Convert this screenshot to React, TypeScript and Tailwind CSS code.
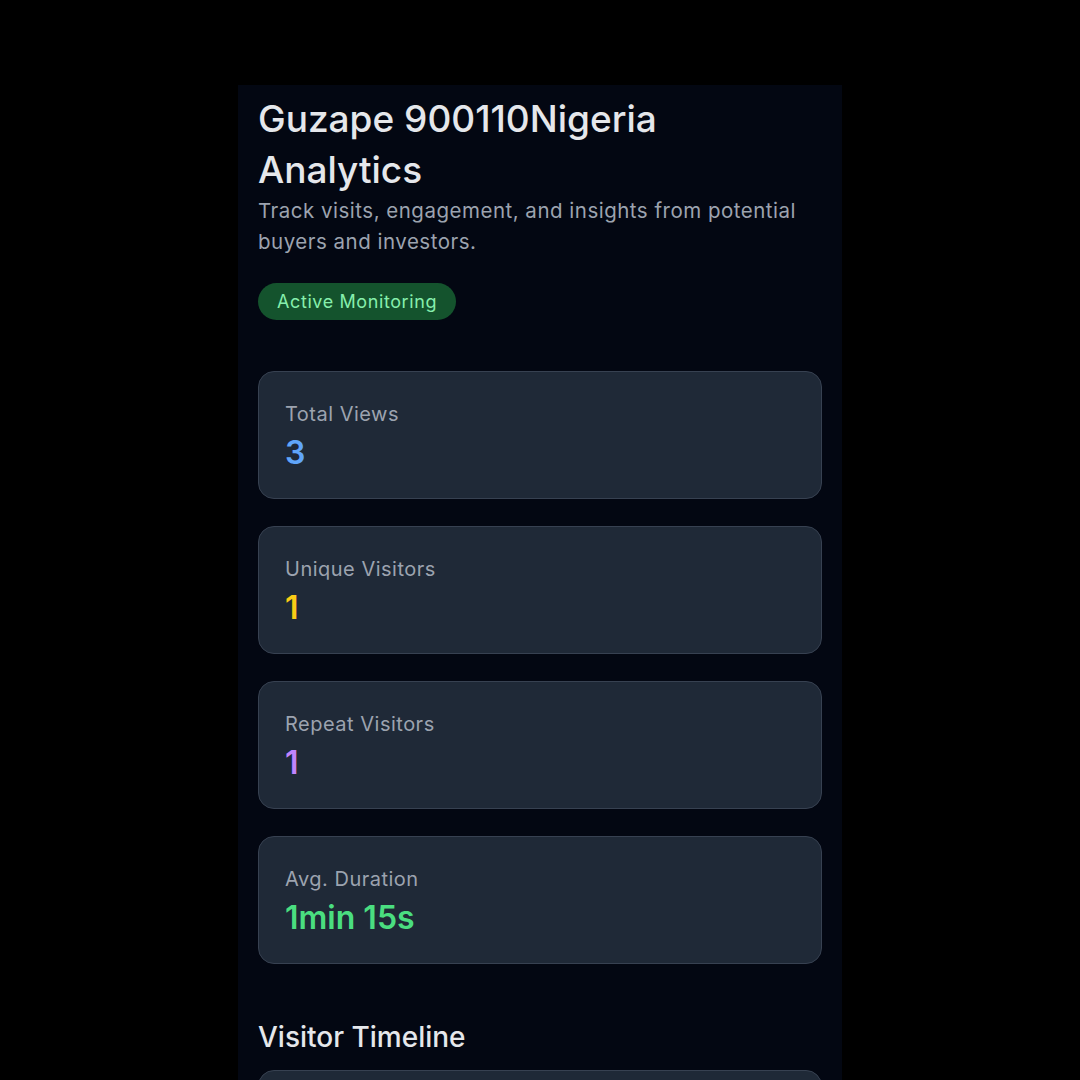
import React from 'react';

// Property analytics summary - stat cards + timeline header

interface Stat {
  label: string;
  value: string;
  color: string;
}

const stats: Stat[] = [
  { label: 'Total Views', value: '3', color: 'text-[#60a5fa]' },
  { label: 'Unique Visitors', value: '1', color: 'text-[#facc15]' },
  { label: 'Repeat Visitors', value: '1', color: 'text-[#c084fc]' },
  { label: 'Avg. Duration', value: '1min 15s', color: 'text-[#4ade80]' },
];

const StatCard: React.FC<{ stat: Stat }> = ({ stat }) => (
  <div className="rounded-[16px] border border-[#374151] bg-[#1f2937] px-[26px] pt-[27px] pb-[25px]">
    <div className="text-[20px] leading-[30px] tracking-[0.5px] text-[#9ca3af]">{stat.label}</div>
    <div className={`mt-[4px] text-[32px] leading-[40px] font-semibold ${stat.color}`}>{stat.value}</div>
  </div>
);

export default function App() {
  return (
    <div
      className="w-[1080px] h-[1080px] bg-black flex justify-center overflow-hidden"
      style={{ fontFamily: 'Inter, "Noto Sans", sans-serif' }}
    >
      <div className="w-[604px] mt-[85px] bg-[#030712] px-[20px] pt-[8px]">
        <h1 className="text-[37px] leading-[51px] font-medium text-[#e5e7eb]">
          Guzape 900110Nigeria Analytics
        </h1>
        <p className="text-[20.5px] leading-[31px] tracking-[0.5px] text-[#9ca3af]">
          Track visits, engagement, and insights from potential buyers and investors.
        </p>
        <div className="mt-[26px]">
          <span className="inline-flex items-center h-[37px] px-[19px] rounded-full bg-[#14532d] text-[#86efac] text-[18px] tracking-[0.6px]">
            Active Monitoring
          </span>
        </div>

        <div className="mt-[51px] flex flex-col gap-[27px]">
          {stats.map((s) => (
            <StatCard key={s.label} stat={s} />
          ))}
        </div>

        <h2 className="mt-[53px] text-[28px] leading-[40px] font-medium text-[#e5e7eb]">
          Visitor Timeline
        </h2>
        <div className="mt-[13px] rounded-[16px] border border-[#374151] bg-[#1f2937] h-[120px]" />
      </div>
    </div>
  );
}
